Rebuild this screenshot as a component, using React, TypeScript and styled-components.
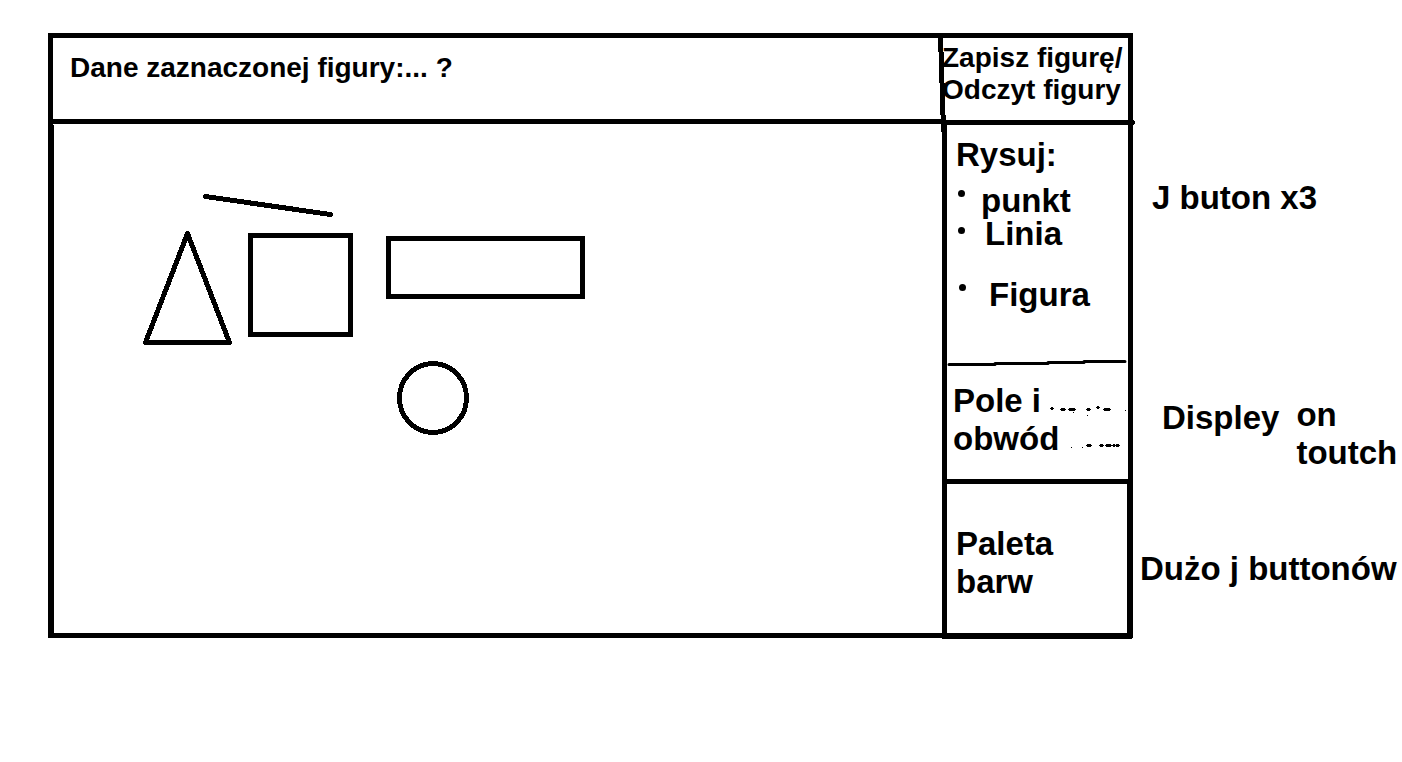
import React from "react";
import styled, { createGlobalStyle } from "styled-components";

const INK = "#000";
const LINE = "5px";

const GlobalStyle = createGlobalStyle`
  *, *::before, *::after { box-sizing: border-box; }
  body {
    margin: 0;
    background: #fff;
    color: ${INK};
    font-family: "Liberation Sans", Arial, sans-serif;
    font-weight: 700;
    font-size: 33px;
    line-height: 38px;
  }
  h1, h2, p, ul { margin: 0; padding: 0; font: inherit; }
`;

const Page = styled.div`
  display: flex;
  align-items: flex-start;
`;

const AppWindow = styled.main`
  flex: 1;
  min-width: 0;
  margin: 33px 0 33px 48px;
  border: ${LINE} solid ${INK};
`;

const TopBar = styled.header`
  display: flex;
  align-items: flex-start;
  font-size: 28px;
  line-height: 32px;
`;

const SelectionInfo = styled.h1`
  flex: 1;
  min-height: 86px;
  padding: 14px 17px 0;
  border-bottom: ${LINE} solid ${INK};
`;

const FileCell = styled.div`
  position: relative;
  width: 186px;
  min-height: 87px;
  padding-top: 4px;
`;

const PlainButton = styled.button`
  display: block;
  padding: 0;
  border: 0;
  background: none;
  color: inherit;
  font: inherit;
  text-align: left;
  white-space: nowrap;
  cursor: pointer;
`;

const CellStrokes = styled.svg`
  position: absolute;
  inset: 0;
  width: 100%;
  height: 87px;
  overflow: visible;
  pointer-events: none;
`;

const Body = styled.div`
  display: flex;
`;

const Canvas = styled.section`
  flex: 1;
  min-width: 0;
  border-left: 1px solid ${INK};
`;

const Figures = styled.svg`
  display: block;
  width: 100%;
  height: 100%;
  fill: none;
  stroke: ${INK};
  stroke-width: 5;
  stroke-linecap: round;
`;

const Sidebar = styled.aside`
  width: 186px;
  border-left: ${LINE} solid ${INK};
  box-shadow: 0 6px 0 ${INK}, 4px 6px 0 ${INK};
`;

const DrawPanel = styled.section`
  padding: 11px 9px 47px;
`;

const ToolArea = styled.div`
  display: flex;
  margin-top: 10px;
`;

const Bullets = styled.svg`
  flex: none;
  width: 25px;
  height: 127px;
`;

const ToolList = styled.ul`
  list-style: none;
  line-height: 33px;
`;

const ToolItem = styled.li<{ $indent: number; $gap?: number }>`
  padding-left: ${(p) => p.$indent}px;
  margin-top: ${(p) => p.$gap ?? 0}px;
`;

const RoughDivider = styled.svg`
  display: block;
  width: 100%;
  height: 10px;
  fill: none;
  stroke: ${INK};
  stroke-width: 3;
  stroke-linecap: round;
`;

const MeasurePanel = styled.section`
  padding: 14px 0 21px 6px;
  border-bottom: ${LINE} solid ${INK};
`;

const MeasureRow = styled.p`
  display: flex;
  justify-content: space-between;
  white-space: nowrap;
`;

const Scribble = styled.svg`
  flex: none;
  height: 38px;
  fill: ${INK};
`;

const PalettePanel = styled.section`
  padding: 41px 64px 32px 9px;
  border-right: 1px solid ${INK};
`;

const Notes = styled.aside`
  flex: none;
  width: 269px;
  padding-top: 179px;
  white-space: nowrap;
`;

const Note = styled.p<{ $left: number; $top?: number }>`
  display: flex;
  gap: 17px;
  padding-left: ${(p) => p.$left}px;
  margin-top: ${(p) => p.$top ?? 0}px;
`;

const NoteWord = styled.span`
  padding-top: 3px;
`;

export default function App() {
  return (
    <>
      <GlobalStyle />
      <Page>
        <AppWindow>
          <TopBar>
            <SelectionInfo>Dane zaznaczonej figury:... ?</SelectionInfo>
            <FileCell>
              <PlainButton type="button">Zapisz figurę/</PlainButton>
              <PlainButton type="button">Odczyt figury</PlainButton>
              <CellStrokes aria-hidden="true" shapeRendering="crispEdges">
                <path d="M-4 0h5v14h-5zM-3 14h5v31h-5zM-2 45h5v32h-5zM-1 77h5v17h-5z" />
                <path d="M-1 82h193v1h1v3h-1v1H-1z" />
              </CellStrokes>
            </FileCell>
          </TopBar>
          <Body>
            <Canvas>
              <Figures role="img" aria-label="Figury" shapeRendering="crispEdges">
                <path d="M151.5 71.5L276.5 89.5" />
                <path d="M133.5 108.5L91.5 217.5H175.5Z" strokeLinejoin="round" />
                <rect x="196.5" y="110.5" width="100" height="99" />
                <rect x="334.5" y="113.5" width="194" height="58" />
                <ellipse cx="379" cy="273" rx="33.5" ry="34.5" />
              </Figures>
            </Canvas>
            <Sidebar>
              <DrawPanel>
                <h2>Rysuj:</h2>
                <ToolArea>
                  <Bullets aria-hidden="true">
                    <circle cx="5.5" cy="9.5" r="3.5" />
                    <circle cx="5.5" cy="46.5" r="3.5" />
                    <circle cx="6.5" cy="103.5" r="3.5" />
                  </Bullets>
                  <ToolList>
                    <ToolItem $indent={0}>
                      <PlainButton type="button">punkt</PlainButton>
                    </ToolItem>
                    <ToolItem $indent={4}>
                      <PlainButton type="button">Linia</PlainButton>
                    </ToolItem>
                    <ToolItem $indent={8} $gap={28}>
                      <PlainButton type="button">Figura</PlainButton>
                    </ToolItem>
                  </ToolList>
                </ToolArea>
              </DrawPanel>
              <RoughDivider aria-hidden="true">
                <path d="M2 6.5H48M48 5.5H101M101 4.5H137M137 3.5H178" />
              </RoughDivider>
              <MeasurePanel>
                <MeasureRow>
                  Pole i
                  <Scribble width="87" aria-hidden="true" shapeRendering="crispEdges">
                    <path d="M10 25h2v1h1v1h-1v1h-2v-1h-1v-1h1z" />
                    <path d="M20 26h4v1h1v1h-1v1h-4v-1h-1v-1h1z" />
                    <path d="M28 26h6v1h1v1h-1v1h-6v-1h-1v-1h1z" />
                    <path d="M46 26h3v1h1v1h-1v1h-3v-1h-1v-1h1z" />
                    <path d="M56 24h2v1h1v1h-1v1h-2v-1h-1v-1h1z" />
                    <path d="M63 26h6v1h1v1h-1v1h-6v-1h-1v-1h1z" />
                    <path d="M32 30h1v1h-1zM46 33h1v1h-1zM84 28h1v1h-1z" />
                  </Scribble>
                </MeasureRow>
                <MeasureRow>
                  obwód
                  <Scribble width="68" aria-hidden="true" shapeRendering="crispEdges">
                    <path d="M27 24h4v1h1v1h-1v1h-4v-1h-1v-1h1z" />
                    <path d="M40 24h3v1h1v1h-1v1h-3v-1h-1v-1h1z" />
                    <path d="M46 24h5v1h1v1h-1v1h-5v-1h-1v-1h1z" />
                    <path d="M53 24h2v1h1v-1h3v1h1v1h-1v1h-3v-1h-1v1h-2v-1h-1v-1h1z" />
                    <path d="M11 27h1v1h-1zM22 27h1v1h-1z" />
                  </Scribble>
                </MeasureRow>
              </MeasurePanel>
              <PalettePanel>
                <h2>Paleta barw</h2>
              </PalettePanel>
            </Sidebar>
          </Body>
        </AppWindow>
        <Notes>
          <Note $left={19}>J buton x3</Note>
          <Note $left={29} $top={179}>
            <NoteWord>Displey</NoteWord>
            <span>
              on
              <br />
              toutch
            </span>
          </Note>
          <Note $left={7} $top={78}>Dużo j buttonów</Note>
        </Notes>
      </Page>
    </>
  );
}
